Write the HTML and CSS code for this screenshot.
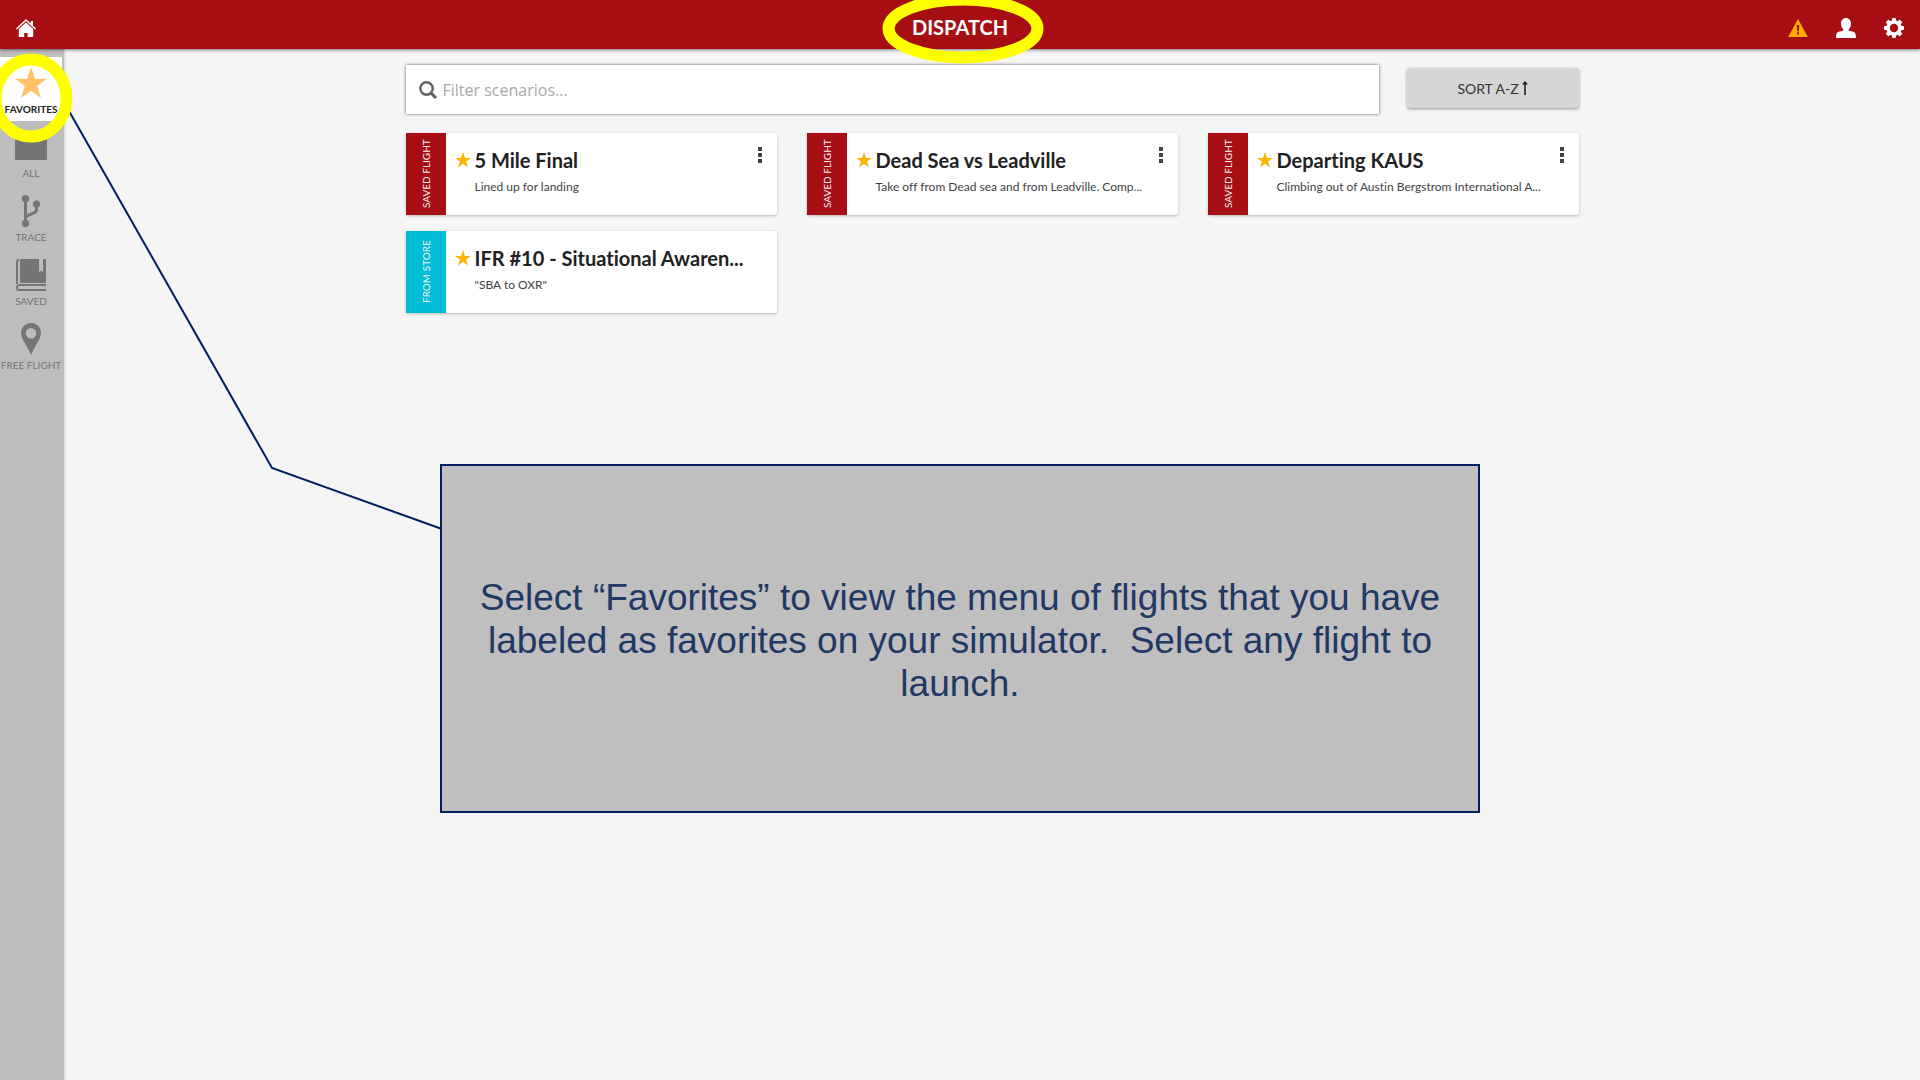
FILE: index.html
```
<!DOCTYPE html>
<html lang="en">
<head>
    <meta charset="UTF-8">
    <meta name="viewport" content="width=device-width, initial-scale=1.0">
    <title>Dispatch</title>
    <link rel="stylesheet" href="styles.css">
</head>
<body>
    <header class="topbar">
        <a class="topbar-link" href="#" aria-label="Home">
            <svg width="20" height="20" viewBox="0 0 20 20"><path fill="#fff" d="M10 1 0 10.4l1 1L10 3l9 8.4 1-1-3-2.9V3h-2.2v2.4zM10 4.4 2.8 11v8h5.4v-4h3.4v4h5.6v-8z"/></svg>
        </a>
        <h1 class="topbar-title">DISPATCH</h1>
        <nav class="topbar-actions">
            <a class="topbar-link" href="#" aria-label="Alerts">
                <svg width="20" height="20" viewBox="0 0 20 20"><path fill="#ffae00" fill-rule="evenodd" d="M10 1 19.8 19H.2zM8.7 7l.5 6.2h1.6l.5-6.2zM8.9 14.3v2.3h2.2v-2.3z"/></svg>
            </a>
            <a class="topbar-link" href="#" aria-label="Account">
                <svg width="20" height="20" viewBox="0 0 20 20"><path fill="#fff" d="M10 0c3 0 5 2.300 5 5.600 0 2.600-1 4.600-2.300 5.700v1.200c1 .6 3.700.8 5.300 1.600 1.300.7 2 2.500 2 5.900H0c0-3.400.7-5.200 2-5.900 1.600-.8 4.300-1 5.300-1.600v-1.200C6 10.200 5 8.200 5 5.600 5 2.300 7 0 10 0z"/></svg>
            </a>
            <a class="topbar-link" href="#" aria-label="Settings">
                <svg width="20" height="20" viewBox="0 0 20 20">
                    <g fill="#fff">
                        <rect id="tooth" x="8" y="0" width="4" height="20" rx="1"/>
                        <use href="#tooth" transform="rotate(45 10 10)"/>
                        <use href="#tooth" transform="rotate(90 10 10)"/>
                        <use href="#tooth" transform="rotate(135 10 10)"/>
                        <circle cx="10" cy="10" r="7.800"/>
                    </g>
                    <circle cx="10" cy="10" r="4.200" fill="#a60e14"/>
                </svg>
            </a>
        </nav>
    </header>

    <div class="layout">
        <nav class="sidebar">
            <a class="side-item active" href="#">
                <svg width="32" height="32" viewBox="0 0 32 32"><path fill="#ffc266" d="M16 0l3.900 11.800H32l-9.800 7.300L26 31l-10-7.300L6 31l3.800-11.900L0 11.800h12.100z"/></svg>
                <span>FAVORITES</span>
            </a>
            <a class="side-item" href="#">
                <svg width="32" height="32" viewBox="0 0 32 32"><path fill="#757575" d="M0 3h32v26H0z"/></svg>
                <span>ALL</span>
            </a>
            <a class="side-item" href="#">
                <svg width="32" height="32" viewBox="0 0 32 32">
                    <g fill="#757575"><circle cx="10.500" cy="3.800" r="3.700"/><circle cx="21.500" cy="9" r="3.600"/><circle cx="10.500" cy="28.400" r="3.600"/></g>
                    <path fill="none" stroke="#757575" stroke-width="3" d="M10.500 4v24M10.500 21.500l9-3.800q2-1 2-3.200V10"/>
                </svg>
                <span>TRACE</span>
            </a>
            <a class="side-item" href="#">
                <svg width="32" height="32" viewBox="0 0 32 32">
                    <path fill="#757575" d="M4 0h20v13l2-1.500 2 1.500V0h3v24H4z"/>
                    <path fill="none" stroke="#bdbdbd" d="M4.500 0v24"/>
                    <path fill="none" stroke="#757575" stroke-width="2" d="M4 1Q2 1 2 3v22M31 26H4q-2 0-2 2.500T4 31h27"/>
                </svg>
                <span>SAVED</span>
            </a>
            <a class="side-item" href="#">
                <svg width="32" height="32" viewBox="0 0 32 32"><path fill="#757575" fill-rule="evenodd" d="M16 0c5.700 0 10 4.300 10 9.800C26 16 20 22.500 16 32 12 22.500 6 16 6 9.800 6 4.300 10.300 0 16 0zm0 5a5.200 5.200 0 1 0 0 10.400A5.200 5.200 0 0 0 16 5z"/></svg>
                <span>FREE FLIGHT</span>
            </a>
        </nav>

        <main class="content">
            <div class="toolbar">
                <label class="search" for="filter">
                    <svg width="18" height="18" viewBox="0 0 18 18"><circle cx="7.500" cy="7.500" r="6.200" fill="none" stroke="#616161" stroke-width="2.400"/><path stroke="#616161" stroke-width="3" d="M12 12l5 5"/></svg>
                    <input type="text" id="filter" placeholder="Filter scenarios..." aria-label="Filter scenarios">
                </label>
                <button class="sort" type="button">SORT A-Z
                    <svg width="6" height="14" viewBox="0 0 6 14"><path fill="#212121" d="M3 0l3 3.500H3.800V14H2.200V3.500H0z"/></svg>
                </button>
            </div>

            <div class="cards">
                <article class="card">
                    <div class="tag">SAVED FLIGHT</div>
                    <svg class="star" width="16" height="16" viewBox="0 0 32 32"><path d="M16 0l3.900 11.800H32l-9.800 7.300L26 31l-10-7.300L6 31l3.800-11.900L0 11.800h12.100z"/></svg>
                    <div class="card-body">
                        <h2>5 Mile Final</h2>
                        <p>Lined up for landing</p>
                    </div>
                    <button class="more" type="button" aria-label="More"><i></i><i></i><i></i></button>
                </article>
                <article class="card">
                    <div class="tag">SAVED FLIGHT</div>
                    <svg class="star" width="16" height="16" viewBox="0 0 32 32"><path d="M16 0l3.900 11.800H32l-9.800 7.300L26 31l-10-7.300L6 31l3.800-11.900L0 11.800h12.100z"/></svg>
                    <div class="card-body">
                        <h2>Dead Sea vs Leadville</h2>
                        <p>Take off from Dead sea and from Leadville. Comp...</p>
                    </div>
                    <button class="more" type="button" aria-label="More"><i></i><i></i><i></i></button>
                </article>
                <article class="card">
                    <div class="tag">SAVED FLIGHT</div>
                    <svg class="star" width="16" height="16" viewBox="0 0 32 32"><path d="M16 0l3.900 11.800H32l-9.800 7.300L26 31l-10-7.300L6 31l3.800-11.900L0 11.800h12.100z"/></svg>
                    <div class="card-body">
                        <h2>Departing KAUS</h2>
                        <p>Climbing out of Austin Bergstrom International A...</p>
                    </div>
                    <button class="more" type="button" aria-label="More"><i></i><i></i><i></i></button>
                </article>
                <article class="card">
                    <div class="tag store">FROM STORE</div>
                    <svg class="star" width="16" height="16" viewBox="0 0 32 32"><path d="M16 0l3.900 11.800H32l-9.800 7.300L26 31l-10-7.300L6 31l3.800-11.900L0 11.800h12.100z"/></svg>
                    <div class="card-body">
                        <h2>IFR #10 - Situational Awaren...</h2>
                        <p>"SBA to OXR"</p>
                    </div>
                </article>
            </div>
        </main>
    </div>

    <!-- help overlay: rings, connector line and the text box -->
    <svg class="marks" width="1920" height="1080" viewBox="0 0 1920 1080">
        <path d="M69 111 272 468l170 61" fill="none" stroke="#002060" stroke-width="2"/>
        <g fill="none" stroke="#ffff00" stroke-width="12">
            <ellipse cx="31" cy="98" rx="35.500" ry="38.500"/>
            <ellipse cx="963" cy="28.500" rx="74.500" ry="29"/>
        </g>
    </svg>
    <div class="callout">
        <p>Select “Favorites” to view the menu of flights that you have labeled as favorites on your simulator.&nbsp; Select any flight to launch.</p>
    </div>
</body>
</html>
```

FILE: styles.css
```
* {
    margin: 0;
    padding: 0;
    box-sizing: border-box;
}

body {
    position: relative;
    display: flex;
    flex-direction: column;
    min-height: 100vh;
    overflow-x: hidden;
    background-color: #f5f5f5;
    color: #212121;
    font-family: Lato, 'Open Sans', sans-serif;
    font-variant-ligatures: none;
}

a {
    color: inherit;
    text-decoration: none;
}

svg {
    display: block;
    flex-shrink: 0;
}

.topbar {
    position: relative;
    display: grid;
    grid-template-columns: 1fr auto 1fr;
    align-items: center;
    height: 49px;
    padding: 6px 16px 0;
    background-color: #a60e14;
    box-shadow: 0 1px 3px rgba(0, 0, 0, 0.5);
}

.topbar-title {
    padding-bottom: 2px;
    color: white;
    font-size: 20px;
    line-height: 24px;
    font-weight: bold;
}

.topbar-actions {
    display: flex;
    justify-content: flex-end;
    gap: 28px;
}

.topbar-link {
    justify-self: start;
}

.layout {
    display: flex;
    flex: 1;
}

.sidebar {
    width: 64px;
    padding-top: 8px;
    background-color: #bdbdbd;
    box-shadow: 0 0 3px rgba(0, 0, 0, 0.3);
}

.side-item {
    display: flex;
    flex-direction: column;
    align-items: center;
    gap: 4px;
    width: 62px;
    height: 64px;
    padding-top: 10px;
    color: #757575;
    font-size: 10px;
    line-height: 12px;
    white-space: nowrap;
}

.side-item.active {
    background-color: white;
    color: #212121;
    font-weight: bold;
}

.content {
    flex: 1;
    max-width: 1205px;
    margin: 0 auto;
    padding: 16px;
}

.toolbar {
    display: flex;
    align-items: flex-start;
    gap: 28px;
    margin-bottom: 19px;
}

.search {
    display: flex;
    flex: 1;
    align-items: center;
    gap: 6px;
    height: 49px;
    padding: 0 13px;
    background-color: white;
    box-shadow: 0 0 3px rgba(0, 0, 0, 0.6);
}

.search input {
    flex: 1;
    border: none;
    outline: none;
    background: none;
    color: #212121;
    font-family: 'Open Sans', sans-serif;
    font-size: 16px;
}

.search input::placeholder {
    color: #a9a9a9;
}

.sort {
    display: flex;
    align-items: center;
    justify-content: center;
    gap: 3px;
    width: 172px;
    height: 40px;
    margin-top: 3px;
    border: none;
    border-radius: 3px;
    background-color: #d6d6d6;
    box-shadow: 0 1px 3px rgba(0, 0, 0, 0.4);
    color: #333;
    font-family: Lato, sans-serif;
    font-size: 14px;
    cursor: pointer;
}

.cards {
    display: grid;
    grid-template-columns: repeat(3, 1fr);
    gap: 16px 30px;
}

.card {
    display: flex;
    height: 82px;
    border-radius: 3px;
    background-color: white;
    box-shadow: 0 1px 3px rgba(0, 0, 0, 0.25);
}

.tag {
    width: 40px;
    background-color: #a60e14;
    color: #f4f4f4;
    font-size: 10px;
    line-height: 40px;
    text-align: center;
    white-space: nowrap;
    writing-mode: vertical-rl;
    transform: rotate(180deg);
}

.tag.store {
    background-color: #00bcd4;
}

.star {
    margin: 19px 4px 0 9px;
    fill: #ffb300;
}

.card-body {
    flex: 1;
    min-width: 0;
    padding-top: 14px;
}

.card-body h2 {
    font-size: 20px;
    line-height: 26px;
    font-weight: bold;
    white-space: nowrap;
}

.card-body p {
    margin-top: 6px;
    color: #424242;
    font-size: 12px;
    line-height: 16px;
    white-space: nowrap;
}

.more {
    display: flex;
    flex-direction: column;
    gap: 2px;
    width: 30px;
    padding: 14px 0 0 11px;
    border: none;
    background: none;
    cursor: pointer;
}

.more i {
    width: 4px;
    height: 4px;
    background-color: #424242;
}

.marks {
    position: absolute;
    top: 0;
    left: 0;
    pointer-events: none;
}

.callout {
    position: absolute;
    top: 464px;
    left: 50%;
    display: flex;
    align-items: center;
    width: 1040px;
    height: 349px;
    padding: 4px 32px 0;
    transform: translateX(-50%);
    border: 2px solid #002060;
    background-color: #bfbfbf;
    color: #1f3864;
    font-family: 'Liberation Sans', Arial, sans-serif;
    font-size: 37px;
    line-height: 43px;
    text-align: center;
}
```
